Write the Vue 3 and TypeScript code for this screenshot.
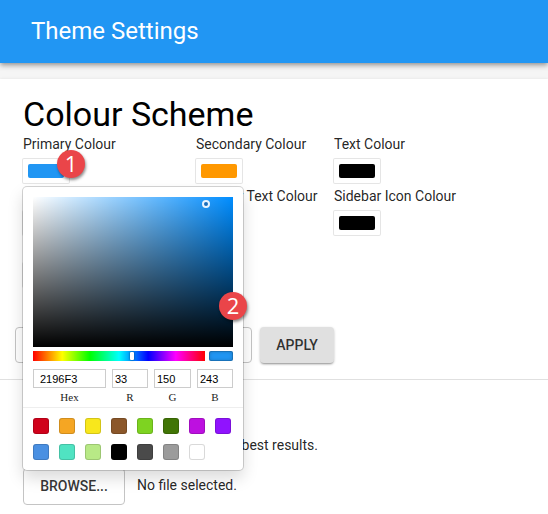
<script setup lang="ts">
import { ref } from 'vue'

interface ColourField {
  label: string
  colour: string
}

const fields: ColourField[] = [
  { label: 'Primary Colour', colour: '#2196f3' },
  { label: 'Secondary Colour', colour: '#ff9800' },
  { label: 'Text Colour', colour: '#000000' },
  { label: 'Sidebar Colour', colour: '#ffffff' },
  { label: 'Sidebar Text Colour', colour: '#000000' },
  { label: 'Sidebar Icon Colour', colour: '#000000' },
  { label: 'Header Colour', colour: '#2196f3' },
]

const hex = ref('2196F3')
const channels = ref([
  { name: 'R', value: '33' },
  { name: 'G', value: '150' },
  { name: 'B', value: '243' },
])

const presets: string[] = [
  '#d0021b', '#f5a623', '#f8e71c', '#8b572a', '#7ed321', '#417505', '#bd10e0', '#9013fe',
  '#4a90e2', '#50e3c2', '#b8e986', '#000000', '#4a4a4a', '#9b9b9b', '#ffffff',
]
</script>

<template>
  <div class="page">
    <header class="bar">Theme Settings</header>
    <main class="card">
      <section class="scheme">
        <h1>Colour Scheme</h1>
        <div class="fields">
          <div v-for="(field, i) in fields" :key="field.label" class="field">
            <label>{{ field.label }}</label>
            <button class="swatch" type="button">
              <span class="chip" :style="{ background: field.colour }"></span>
            </button>
            <span v-if="i === 0" class="marker first">1</span>
            <div v-if="i === 0" class="picker">
              <div class="saturation"><span class="pointer"></span></div>
              <div class="controls">
                <div class="hue"><span class="slider"></span></div>
                <div class="preview"></div>
              </div>
              <div class="inputs">
                <div class="entry hex">
                  <input v-model="hex" spellcheck="false" />
                  <span>Hex</span>
                </div>
                <div v-for="c in channels" :key="c.name" class="entry">
                  <input v-model="c.value" />
                  <span>{{ c.name }}</span>
                </div>
              </div>
              <div class="presets">
                <span
                  v-for="p in presets"
                  :key="p"
                  class="preset"
                  :style="{ background: p }"
                ></span>
              </div>
              <span class="marker second">2</span>
            </div>
          </div>
        </div>
      </section>
      <div class="actions">
        <button class="outlined reset" type="button"></button>
        <button class="apply" type="button">APPLY</button>
      </div>
      <section class="logo">
        <p class="hint">best results.</p>
        <div class="upload">
          <button class="outlined browse" type="button">BROWSE...</button>
          <span class="file">No file selected.</span>
        </div>
      </section>
    </main>
  </div>
</template>

<style>
body {
  background: #f5f5f5;
  overflow: hidden;
}
</style>

<style scoped>
* {
  box-sizing: border-box;
}
.page {
  height: 514px;
  display: flex;
  flex-direction: column;
  gap: 16px;
  overflow: hidden;
  font-family: Roboto, sans-serif;
  font-size: 14px;
  color: rgba(0, 0, 0, 0.87);
}
.bar {
  flex: none;
  height: 63px;
  padding-left: 31px;
  line-height: 62px;
  font-size: 24px;
  color: #fff;
  background: #2196f3;
  box-shadow: 0 2px 4px -1px rgba(0, 0, 0, 0.2), 0 3px 5px rgba(0, 0, 0, 0.18),
    0 1px 8px rgba(0, 0, 0, 0.12);
}
.card {
  flex: 1;
  background: #fff;
  box-shadow: 0 0 3px rgba(0, 0, 0, 0.08);
}
.scheme {
  height: 248px;
  padding: 15px 23px 0;
}
h1 {
  margin: 0;
  height: 40px;
  line-height: 40px;
  font-size: 34px;
  font-weight: 400;
  color: #000;
}
.fields {
  display: grid;
  grid-template-columns: 173px 138px 150px;
  grid-auto-rows: 52px;
}
.field {
  position: relative;
}
label {
  display: block;
  height: 25px;
  line-height: 20px;
  white-space: nowrap;
}
.swatch {
  display: block;
  width: 46px;
  height: 24px;
  padding: 5px;
  border: 0;
  border-radius: 1px;
  background: #fff;
  box-shadow: 0 0 0 1px rgba(0, 0, 0, 0.1);
}
.chip {
  display: block;
  width: 36px;
  height: 14px;
  border-radius: 2px;
}
.picker {
  position: absolute;
  z-index: 2;
  top: 53px;
  left: 0;
  width: 220px;
  height: 283px;
  padding: 10px 10px 0;
  border-radius: 4px;
  background: #fff;
  box-shadow: 0 0 0 1px rgba(0, 0, 0, 0.17), 0 8px 16px rgba(0, 0, 0, 0.15);
}
.saturation {
  position: relative;
  height: 150px;
  background: linear-gradient(to top, #000, rgba(0, 0, 0, 0)),
    linear-gradient(to right, #fff, rgba(255, 255, 255, 0)), #008dff;
}
.pointer {
  position: absolute;
  left: 169px;
  top: 3px;
  width: 8px;
  height: 8px;
  border: 2px solid #e8f4ff;
  border-radius: 50%;
  background: #1a6dbb;
}
.controls {
  display: flex;
  gap: 4px;
  padding-top: 4px;
}
.hue {
  position: relative;
  width: 172px;
  height: 10px;
  background: linear-gradient(to right, #f00 0%, #ff0 17%, #0f0 33%, #0ff 50%, #00f 67%, #f0f 83%, #f00 100%);
}
.slider {
  position: absolute;
  left: 97px;
  top: 1px;
  width: 4px;
  height: 8px;
  border-radius: 1px;
  background: #fff;
  box-shadow: 0 0 2px rgba(0, 0, 0, 0.6);
}
.preview {
  width: 24px;
  height: 10px;
  border-radius: 2px;
  background: #2196f3;
  box-shadow: inset 0 0 0 1px rgba(0, 0, 0, 0.15), inset 0 0 4px rgba(0, 0, 0, 0.25);
}
.inputs {
  display: grid;
  grid-template-columns: 73px 36px 37px 36px;
  gap: 6px;
  padding-top: 8px;
  height: 46px;
}
.entry {
  display: flex;
  flex-direction: column;
  align-items: center;
  font: 11px/12px 'Liberation Serif', serif;
  color: #222;
}
.entry input {
  width: 100%;
  height: 19px;
  margin: 0 0 3px;
  padding: 0 0 0 2px;
  border: 1px solid #ccc;
  border-radius: 0;
  outline: 0;
  font: 11px 'Liberation Sans', sans-serif;
  color: #000;
  background: #fff;
}
.entry.hex input {
  padding-left: 6px;
}
.presets {
  display: flex;
  flex-wrap: wrap;
  gap: 10px;
  margin: 0 -10px;
  padding: 10px 5px 0 10px;
  border-top: 1px solid #eee;
}
.preset {
  width: 16px;
  height: 16px;
  border-radius: 3px;
  box-shadow: inset 0 0 0 1px rgba(0, 0, 0, 0.15);
}
.marker {
  position: absolute;
  z-index: 3;
  width: 28px;
  height: 28px;
  border-radius: 50%;
  background: #ea4549;
  box-shadow: 1px 2px 3px rgba(0, 0, 0, 0.45);
  color: #fff;
  font: 22px/26px 'Open Sans', sans-serif;
  text-align: center;
}
.first {
  left: 34px;
  top: 16px;
}
.second {
  left: 196px;
  top: 105px;
}
.actions {
  display: flex;
  gap: 8px;
  height: 53px;
  padding-left: 15px;
  border-bottom: 1px solid #e0e0e0;
}
button {
  font-family: inherit;
}
.outlined,
.apply {
  height: 36px;
  padding: 0;
  border-radius: 4px;
  font-size: 14px;
  font-weight: 500;
  color: rgba(0, 0, 0, 0.8);
}
.outlined {
  border: 1px solid #c4c4c4;
  background: #fff;
}
.reset {
  width: 237px;
}
.apply {
  width: 74px;
  border: 0;
  background: #e0e0e0;
  box-shadow: 0 2px 2px -1px rgba(0, 0, 0, 0.3), 0 1px 3px rgba(0, 0, 0, 0.2);
}
.logo {
  padding: 55px 23px 0;
}
.hint {
  width: 295px;
  margin: 0 0 13px;
  line-height: 20px;
  text-align: right;
}
.upload {
  display: flex;
  align-items: center;
  gap: 12px;
}
.browse {
  width: 102px;
  height: 37px;
  padding-bottom: 2px;
}
.file {
  padding-bottom: 4px;
}
</style>
